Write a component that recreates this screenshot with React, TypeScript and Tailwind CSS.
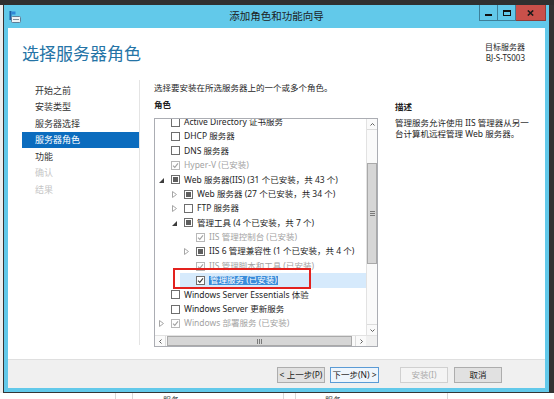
import React from 'react';

type Box = 'empty' | 'partial' | 'checked';

type RoleRow = {
  level: 0 | 1 | 2;
  exp?: 'open' | 'closed';
  box: Box;
  text: string;
  dim?: boolean;
  selected?: boolean;
};

const rows: RoleRow[] = [
  { level: 0, box: 'empty', text: 'Active Directory 证书服务' },
  { level: 0, box: 'empty', text: 'DHCP 服务器' },
  { level: 0, box: 'empty', text: 'DNS 服务器' },
  { level: 0, box: 'checked', text: 'Hyper-V (已安装)', dim: true },
  { level: 0, exp: 'open', box: 'partial', text: 'Web 服务器(IIS) (31 个已安装，共 43 个)' },
  { level: 1, exp: 'closed', box: 'partial', text: 'Web 服务器 (27 个已安装，共 34 个)' },
  { level: 1, exp: 'closed', box: 'empty', text: 'FTP 服务器' },
  { level: 1, exp: 'open', box: 'partial', text: '管理工具 (4 个已安装，共 7 个)' },
  { level: 2, box: 'checked', text: 'IIS 管理控制台 (已安装)', dim: true },
  { level: 2, exp: 'closed', box: 'partial', text: 'IIS 6 管理兼容性 (1 个已安装，共 4 个)' },
  { level: 2, box: 'checked', text: 'IIS 管理脚本和工具 (已安装)', dim: true },
  { level: 2, box: 'checked', text: '管理服务 (已安装)', selected: true },
  { level: 0, box: 'empty', text: 'Windows Server Essentials 体验' },
  { level: 0, box: 'empty', text: 'Windows Server 更新服务' },
  { level: 0, exp: 'closed', box: 'checked', text: 'Windows 部署服务 (已安装)', dim: true },
];

const navItems = [
  { label: '开始之前' },
  { label: '安装类型' },
  { label: '服务器选择' },
  { label: '服务器角色', active: true },
  { label: '功能' },
  { label: '确认', disabled: true },
  { label: '结果', disabled: true },
];

function Expander({ kind }: { kind?: 'open' | 'closed' }) {
  return (
    <div className="flex h-full w-[13px] shrink-0 items-center">
      {kind === 'open' && (
        <svg width="5" height="5" viewBox="0 0 5 5" className="ml-[1px] mt-[2px]">
          <path d="M5 0 L5 5 L0 5 Z" fill="#3c3c3c" />
        </svg>
      )}
      {kind === 'closed' && (
        <svg width="5" height="7" viewBox="0 0 5 7" className="ml-[1px]">
          <path d="M0.5 0.5 L4.5 3.5 L0.5 6.5 Z" fill="none" stroke="#a6a6a6" strokeWidth="1" />
        </svg>
      )}
    </div>
  );
}

function Check({ box, dim }: { box: Box; dim?: boolean }) {
  const border = dim ? 'border-[#b8b8b8]' : 'border-[#6e6e6e]';
  return (
    <div className={`flex h-[9px] w-[9px] shrink-0 items-center justify-center border bg-white ${border}`}>
      {box === 'partial' && <div className="h-[5px] w-[5px] bg-[#5e5e5e]" />}
      {box === 'checked' && (
        <svg width="7" height="7" viewBox="0 0 7 7">
          <path d="M1 3.6 L2.8 5.4 L6 1.4" fill="none" stroke={dim ? '#a3a3a3' : '#3d3d3d'} strokeWidth="1.1" />
        </svg>
      )}
    </div>
  );
}

function Row({ r }: { r: RoleRow }) {
  const pl = r.level === 0 ? 'pl-[3px]' : r.level === 1 ? 'pl-[16px]' : 'pl-[28px]';
  const color = r.dim ? 'text-[#a3a3a3]' : 'text-[#1e1e1e]';

  if (r.selected) {
    return (
      <div className="relative flex h-[14.4px] items-center pl-[25px]">
        <div className="flex h-full flex-1 items-center bg-[#d6eafc] pl-[3px]">
          <Expander kind={r.exp} />
          <Check box={r.box} />
          <span className="ml-[4px] bg-[#3b8ddb] px-[1px] text-white">{r.text}</span>
        </div>
        <div className="absolute -top-[5px] left-[18px] h-[21px] w-[138px] border-2 border-[#e3221e]" />
      </div>
    );
  }

  return (
    <div className={`flex h-[14.4px] items-center whitespace-nowrap ${pl} ${color}`}>
      <Expander kind={r.exp} />
      <Check box={r.box} dim={r.dim} />
      <span className="ml-[4px]">{r.text}</span>
    </div>
  );
}

function Arrow({ dir }: { dir: 'up' | 'down' | 'left' | 'right' }) {
  const d =
    dir === 'up'
      ? 'M1.5 4.5 L3.5 2.5 L5.5 4.5'
      : dir === 'down'
        ? 'M1.5 2.5 L3.5 4.5 L5.5 2.5'
        : dir === 'left'
          ? 'M4.5 1.5 L2.5 3.5 L4.5 5.5'
          : 'M2.5 1.5 L4.5 3.5 L2.5 5.5';
  return (
    <svg width="7" height="7" viewBox="0 0 7 7">
      <path d={d} fill="none" stroke="#606060" strokeWidth="1" />
    </svg>
  );
}

function RoleList() {
  return (
    <div className="flex h-[229px] w-[224px] flex-col border border-[#abadb3] bg-white">
      <div className="flex h-[216px]">
        <div className="w-[211px] overflow-hidden text-[8.5px] leading-none">
          <div className="-mt-[4px]">
            {rows.map((r) => (
              <Row key={r.text} r={r} />
            ))}
          </div>
        </div>
        {/* vertical scrollbar */}
        <div className="flex w-[11px] flex-col border-l border-[#e2e2e2] bg-[#fafafa]">
          <div className="flex h-[11px] items-center justify-center border-b border-[#dcdcdc]">
            <Arrow dir="up" />
          </div>
          <div className="h-[33px]" />
          <div className="flex h-[101px] items-center justify-center border border-[#a9a9a9] bg-[#d6d6d6]">
            <div className="flex flex-col gap-[1px]">
              <div className="h-px w-[5px] bg-[#7a7a7a]" />
              <div className="h-px w-[5px] bg-[#7a7a7a]" />
              <div className="h-px w-[5px] bg-[#7a7a7a]" />
            </div>
          </div>
          <div className="flex-1" />
          <div className="flex h-[11px] items-center justify-center border-t border-[#dcdcdc]">
            <Arrow dir="down" />
          </div>
        </div>
      </div>
      {/* horizontal scrollbar */}
      <div className="flex h-[11px] border-t border-[#e2e2e2] bg-[#fafafa]">
        <div className="flex w-[11px] items-center justify-center border-r border-[#dcdcdc]">
          <Arrow dir="left" />
        </div>
        <div className="ml-[1px] flex w-[185px] items-center justify-center border border-[#a9a9a9] bg-[#d6d6d6]">
          <div className="flex gap-[1px]">
            <div className="h-[5px] w-px bg-[#7a7a7a]" />
            <div className="h-[5px] w-px bg-[#7a7a7a]" />
            <div className="h-[5px] w-px bg-[#7a7a7a]" />
          </div>
        </div>
        <div className="flex-1" />
        <div className="flex w-[11px] items-center justify-center border-l border-[#dcdcdc]">
          <Arrow dir="right" />
        </div>
        <div className="w-[11px] bg-[#f0f0f0]" />
      </div>
    </div>
  );
}

export default function App() {
  return (
    <div className="flex h-[399px] w-[554px] flex-col overflow-hidden bg-[#2f2f2f] [font-family:'Noto_Sans','Noto_Sans_CJK_SC',sans-serif]">
      <div className="h-[5px] shrink-0 bg-[#303030]" />

      <div className="flex h-[388px] shrink-0">
        <div className="w-[3px] bg-[#eeeeee]" />

        {/* wizard window */}
        <div className="relative flex w-[546px] flex-col border-b border-l border-[#353535] bg-[#62c9ea] pb-[4px] pl-[4px] pr-[4px]">
          <div className="flex h-[23px] shrink-0 items-center">
            <svg width="12" height="12" viewBox="0 0 12 12" className="ml-[1px] mt-[1px]">
              <rect x="0.5" y="0" width="2" height="9" fill="#1d5fa6" />
              <rect x="2.5" y="0.5" width="4" height="3" fill="#2f86d6" />
              <rect x="2.5" y="5.5" width="9" height="6" rx="1" fill="#eef2f5" stroke="#5f7f98" />
              <rect x="4" y="8" width="6" height="1" fill="#7d8e9b" />
            </svg>
            <div className="-ml-[13px] flex-1 text-center text-[10.5px] text-[#1c1c1c]">添加角色和功能向导</div>
          </div>

          <div className="absolute right-[3px] top-0 flex h-[16px]">
            <div className="flex w-[18px] items-end justify-center border border-r-0 border-t-0 border-[#3d7f99] pb-[4px]">
              <div className="h-[2px] w-[7px] bg-[#111]" />
            </div>
            <div className="flex w-[19px] items-center justify-center border border-t-0 border-[#3d7f99]">
              <div className="h-[6px] w-[8px] border border-t-2 border-[#111]" />
            </div>
            <div className="flex w-[30px] items-center justify-center border border-l-0 border-t-0 border-[#8e3d39] bg-[#c9504a]">
              <svg width="7" height="6" viewBox="0 0 7 6">
                <path d="M0.8 0.5 L6.2 5.5 M6.2 0.5 L0.8 5.5" stroke="#1a1a1a" strokeWidth="1.6" />
              </svg>
            </div>
          </div>

          {/* content */}
          <div className="flex flex-1 flex-col bg-white">
            <div className="flex h-[52px] shrink-0 justify-between">
              <div className="pl-[14px] pt-[14px] text-[17px] leading-[24px] text-[#2574a6]">选择服务器角色</div>
              <div className="pr-[20px] pt-[13px] text-right text-[8px] leading-[11px] text-[#1e1e1e]">
                <div>目标服务器</div>
                <div>BJ-S-TS003</div>
              </div>
            </div>

            <div className="flex flex-1">
              <div className="mb-[14px] ml-[14px] w-[118px] border-r border-[#e4e4e4] pt-[2px] text-[9px]">
                {navItems.map((n) => (
                  <div
                    key={n.label}
                    className={`flex h-[16.5px] items-center pl-[13px] ${
                      n.active ? 'bg-[#0b6cbe] text-white' : n.disabled ? 'text-[#c6c6c6]' : 'text-[#333333]'
                    }`}
                  >
                    {n.label}
                  </div>
                ))}
              </div>

              <div className="ml-[14px] flex flex-col">
                <div className="h-[16px] text-[8.5px] leading-[16px] text-[#1e1e1e]">选择要安装在所选服务器上的一个或多个角色。</div>
                <div className="mt-[1px] h-[16px] text-[8.5px] font-bold leading-[16px] text-[#1e1e1e]">角色</div>
                <div className="mt-[5px]">
                  <RoleList />
                </div>
              </div>

              <div className="ml-[17px] whitespace-nowrap pt-[19px] text-[8.5px] text-[#1e1e1e]">
                <div className="h-[16px] font-bold leading-[16px]">描述</div>
                <div className="mt-[2px] leading-[11px]">
                  管理服务允许使用 IIS 管理器从另一
                  <br />
                  台计算机远程管理 Web 服务器。
                </div>
              </div>
            </div>
          </div>

          {/* footer */}
          <div className="flex h-[29px] shrink-0 justify-end border-t border-[#dfdfdf] bg-[#f0f0f0] pr-[43px] pt-[7px] text-[8.5px] leading-none">
            <div className="flex h-[16px] w-[48px] items-center justify-center border border-[#adadad] bg-[#e1e1e1] text-[#1a1a1a]">
              &lt; 上一步(P)
            </div>
            <div className="ml-[5px] flex h-[16px] w-[49px] items-center justify-center border border-[#5b9bd5] bg-[#eef5fc] text-[#1a1a1a]">
              下一步(N) &gt;
            </div>
            <div className="ml-[21px] flex h-[16px] w-[48px] items-center justify-center border border-[#d0d0d0] bg-[#f4f4f4] text-[#ababab]">
              安装(I)
            </div>
            <div className="ml-[6px] flex h-[16px] w-[48px] items-center justify-center border border-[#adadad] bg-[#e1e1e1] text-[#1a1a1a]">
              取消
            </div>
          </div>
        </div>

        <div className="flex-1 bg-[#333333]" />
      </div>

      {/* background window peeking below */}
      <div className="flex h-[6px] shrink-0 overflow-hidden bg-white text-[8px] leading-[10px] text-[#333]">
        <div className="w-[115px]" />
        <div className="w-[17px] border-l border-[#d8d8d8]" />
        <div className="w-[151px] border-l border-[#d8d8d8] pl-[30px] pt-[2px]">服务</div>
        <div className="w-[12px] border-l border-[#d8d8d8]" />
        <div className="w-[152px] border-l border-[#d8d8d8] pl-[29px] pt-[2px]">服务</div>
        <div className="flex-1 border-l border-[#d8d8d8]" />
      </div>
    </div>
  );
}
